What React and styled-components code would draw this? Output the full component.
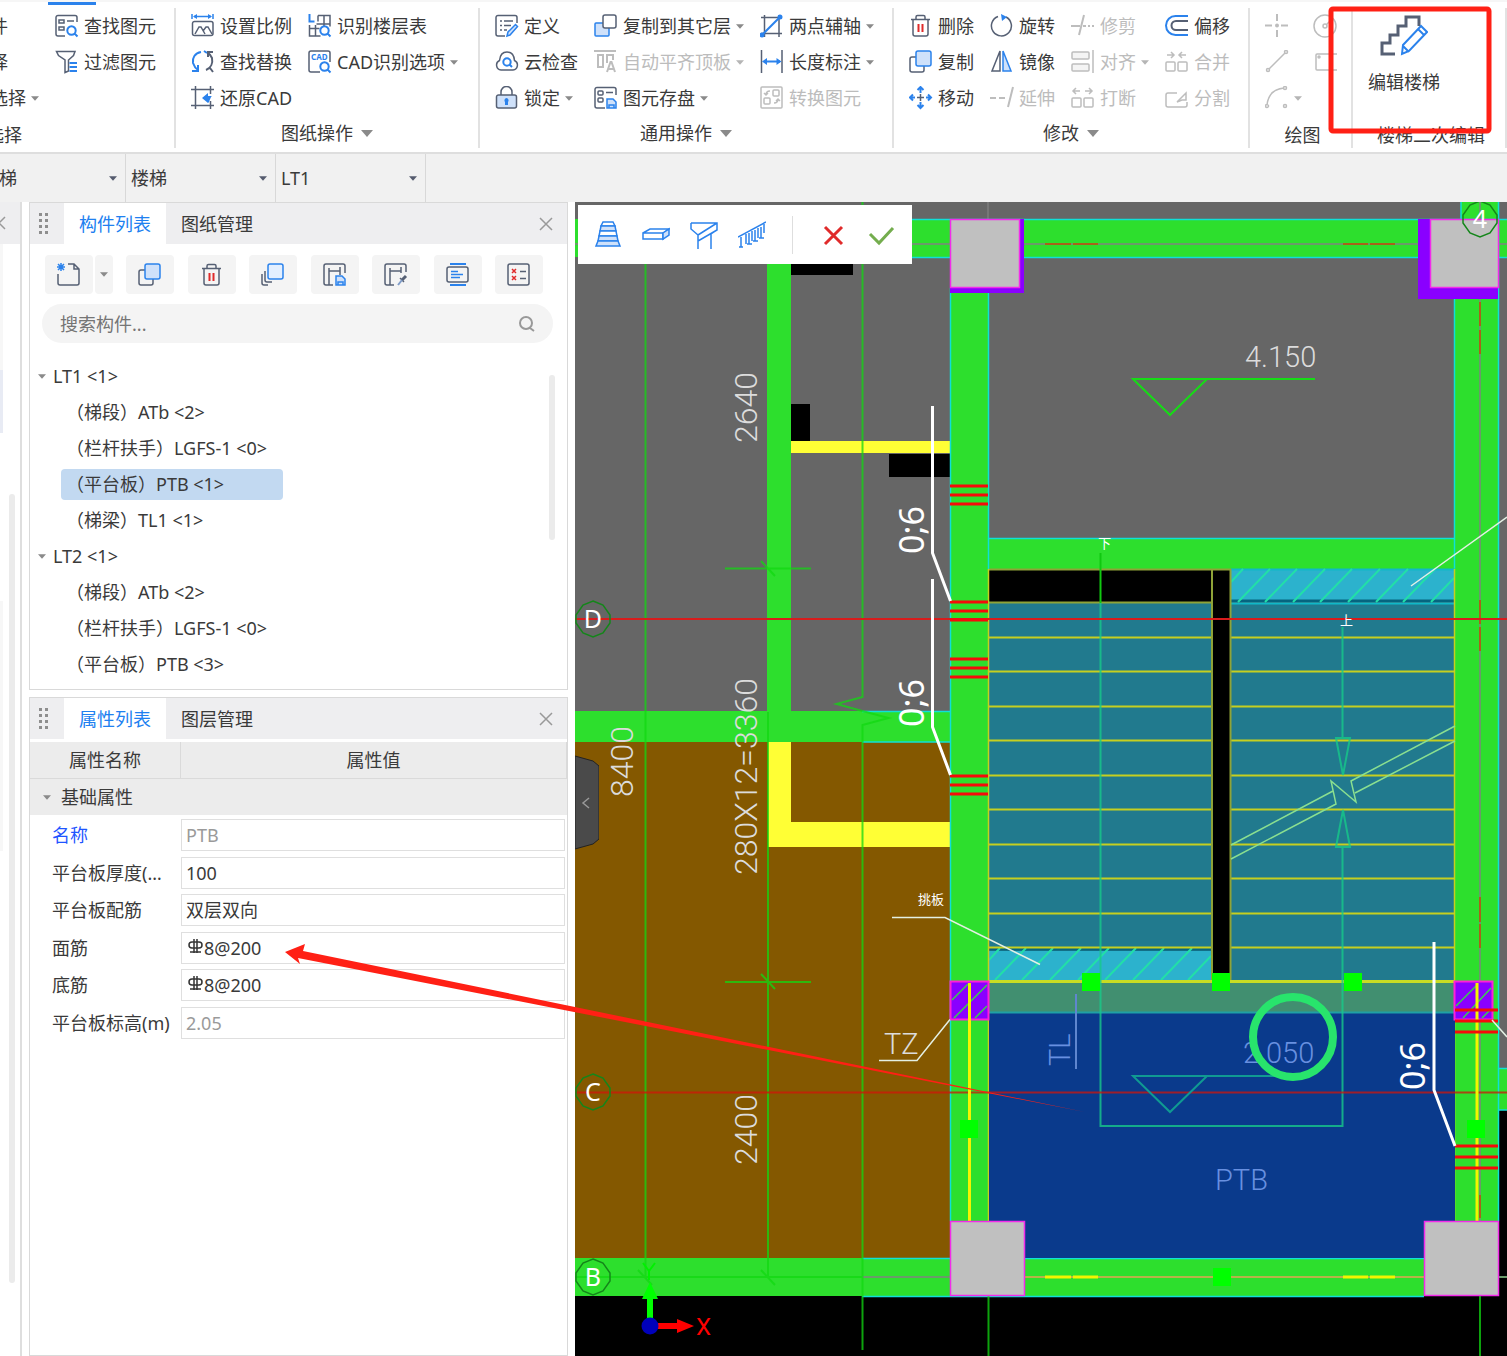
import React from "react";
import styled, { createGlobalStyle } from "styled-components";

const DARK = "#566074";
const BLUE = "#2b82ec";
const PALE = "#cfe1fa";
const GRAY = "#bdbdbd";
const RED = "#e02b2b";

const ring = (cx, cy, r) =>
  `M${cx - r} ${cy}a${r} ${r} 0 1 0 ${2 * r} 0a${r} ${r} 0 1 0 ${-2 * r} 0z`;
const box = (x, y, w, h, r = 1) =>
  `M${x + r} ${y}h${w - 2 * r}a${r} ${r} 0 0 1 ${r} ${r}v${h - 2 * r}a${r} ${r} 0 0 1 ${-r} ${r}h${2 * r - w}a${r} ${r} 0 0 1 ${-r} ${-r}v${2 * r - h}a${r} ${r} 0 0 1 ${r} ${-r}z`;
const lens = `${ring(16.5, 16.5, 4.2)}M19.5 19.5l3 3`;

// every icon is a list of [stroke, path, fill, stroke width]
const icons = {
  findElement: [
    [DARK, "M22 8V3.5a2 2 0 0 0-2-2H3a2 2 0 0 0-2 2V20a2 2 0 0 0 2 2h7"],
    [DARK, "M4 6h5v3H4zM4 13h5v3H4zM12 7h7"],
    [BLUE, lens, "none", 2],
  ],
  filter: [
    [DARK, "M1.5 1.5h18.5l-1.5 4-5 4.5v11L10 22.500V10L3.500 5.500z"],
    [BLUE, "M14.5 13h7.5M14.5 17h7.5M14.5 21h7.5", "none", 2],
  ],
  scale: [
    [BLUE, "M1 0v5M22 0v5M3 2.5h17"],
    ["none", "M2 2.5l4-2.5v5zM21 2.5l-4-2.5v5z", BLUE],
    [DARK, box(1.5, 7.5, 20.5, 14, 2)],
    [DARK, "M4 20l4-7h2l4 7M12 17l3-4h2l4 7"],
  ],
  floors: [
    [BLUE, "M1.5 0v7.5h5", "none", 2],
    [DARK, "M10 1.5h12v11M16 1.5v11M10 1.5v6M8.5 10H22M1.5 11v11h11M1.5 14.5h10M7.5 11v11"],
    [BLUE, lens, "none", 2],
  ],
  replace: [
    [BLUE, "M10 2C4 3 1 8 2 13c1 3 2 5 5 7M7 15v6H1M13 1l3 2", "none", 2],
    [DARK, "M15 20c5-2 7-7 6-12-1-2-2-4-4-5M22 2h-5v5M19 18l3 4", "none", 2],
  ],
  cadOptions: [
    [DARK, "M22 12V3a2 2 0 0 0-2-2H3a2 2 0 0 0-2 2v17a2 2 0 0 0 2 2h9"],
    [BLUE, lens, "none", 2],
  ],
  restore: [
    [DARK, "M4.5 0v23M19.500 0v8M19.5 15v8M0 3.5h23M0 19.5h23"],
    ["none", "M11 12l6-5v3h4c-2 1-2 6-4 7z", BLUE],
  ],
  define: [
    [DARK, "M22 9V3.5a2 2 0 0 0-2-2H3a2 2 0 0 0-2 2V20a2 2 0 0 0 2 2h7M5 7h2M9 7h9M5 11.5h2M9 11.5h7M5 16h2M9 16h3"],
    [BLUE, "M12 22l1-4 7.5-7.5 2 2L15 21z", PALE],
  ],
  cloud: [
    [DARK, "M6 20a5 5 0 0 1-1.5-9.5C5 5 8 2 12 2s7 3 7.5 8.5A5 5 0 0 1 18 20z"],
    [BLUE, `${ring(12, 12, 3.7)}M14.5 14.5l2.5 2.5`, "none", 2],
  ],
  lock: [
    [DARK, "M6 9V6a5.5 5.5 0 0 1 11 0v3"],
    [DARK, box(1.5, 9, 20, 13, 2), PALE],
    ["none", "M11.5 12a2.5 2.5 0 0 1 1.500 4v3h-3v-3a2.5 2.5 0 0 1 1.5-4z", BLUE],
  ],
  copyFloor: [
    [BLUE, box(1, 9, 14, 13), PALE],
    [DARK, box(9, 1, 13, 13, 2), "#fff"],
  ],
  autoAlign: [
    [GRAY, "M0 1h22M4 5h5v12H4zM13 13V5h6v5", "none", 2],
    [GRAY, "M13 22l3.5-10h1L21 22M14 19h6", "none", 2],
  ],
  save: [
    [DARK, "M22 9V3.5a2 2 0 0 0-2-2H3a2 2 0 0 0-2 2V20a2 2 0 0 0 2 2h8M12 6.5h7"],
    [DARK, `${box(4, 5, 5, 4)}${box(4, 12, 5, 4)}`],
    [BLUE, "M13 13h6l3 3v6h-9zM15 22v-3h5v3", PALE],
  ],
  axis: [
    [DARK, "M4.5 1v22M19 1v22M1 3.5h21M1 19.5h21"],
    [BLUE, "M2 21L20 3", "none", 2],
    ["none", ring(20, 3, 2.5) + ring(2, 21, 2.5), BLUE],
  ],
  dimension: [
    [DARK, "M1.5 0v23M22 0v23"],
    [BLUE, "M4 11.5h16", "none", 2],
    ["none", "M2 11.5l5-3.5v7zM21.5 11.5l-5-3.5v7z", BLUE],
  ],
  convert: [
    [GRAY, `${box(1, 1, 21, 21)}${box(4, 12, 6, 6)}${box(13, 4, 6, 6)}M6 9c0-3 1-4 4-4M8 7L6 9 4 7M18 13c0 3-1 4-4 4M16 15l2-2 2 2`],
  ],
  trash: [
    [DARK, "M2 5.5h19M7 5V3a1.5 1.5 0 0 1 1.5-1.5h6A1.500 1.5 0 0 1 16 3v2M4 5.5V20a2 2 0 0 0 2 2h11a2 2 0 0 0 2-2V5.5"],
    [RED, "M9.5 10v8M13.5 10v8", "none", 2],
  ],
  rotate: [
    [DARK, "M8 2.5A10 10 0 1 0 16 3"],
    ["none", "M11 0l6 3-5 4z", BLUE],
  ],
  trim: [[GRAY, "M13 1L8 21M0 12h9M12 12h3M17 12h2M21 12h2", "none", 2]],
  offset: [
    [BLUE, "M23 2H10.5a9.5 9.5 0 0 0 0 19H23", "none", 2],
    [DARK, "M23 7H11a4.5 4.5 0 0 0 0 9h12", "none", 2],
  ],
  copy: [
    [DARK, box(1, 7, 14, 15, 2)],
    [BLUE, box(7, 1, 15, 15, 2), PALE],
  ],
  mirror: [
    [DARK, "M10 1v20H2z"],
    [BLUE, "M13 1v20h8z", PALE],
  ],
  align: [
    [GRAY, "M22 0v23"],
    [GRAY, `${box(1, 2, 17, 7)}${box(1, 14, 17, 7)}`, "#f4f4f4"],
  ],
  merge: [[GRAY, `${box(1, 12, 9, 9)}${box(13, 12, 9, 9)}M2 5h7M6 2l3 3-3 3M21 5h-7M17 2l-3 3 3 3`]],
  move: [
    [BLUE, "M11.5 1v6M8.5 4l3-3 3 3M11.5 16v6M8.5 19l3 3 3-3M1 11.5h5M4 8.5l-3 3 3 3M17 11.5h5M19 8.5l3 3-3 3", "none", 2],
    [DARK, "M8 11.5h7M11.5 8v7"],
  ],
  extend: [[GRAY, "M0 12h6M9 12h6M23 1l-5 20", "none", 2]],
  breakApart: [[GRAY, `${box(1, 12, 9, 9)}${box(13, 12, 9, 9)}M2 5h7M5 2L2 5l3 3M21 5h-7M18 2l3 3-3 3`]],
  split: [[GRAY, "M12 7H3a2 2 0 0 0-2 2v10a2 2 0 0 0 2 2h17a2 2 0 0 0 2-2v-3M12 16l9-9v7h-4z"]],
  point: [
    [GRAY, "M12 0v7M12 16v7M0 11.5h7M16 11.5h7", "none", 2],
    ["none", ring(12, 11.5, 2), GRAY],
  ],
  circle: [[GRAY, `${ring(12, 12, 11)}${ring(12, 12, 2)}M14 10l4-4`]],
  line: [[GRAY, `M4 19L20 3${ring(3, 20, 1.5)}${ring(21, 2, 1.5)}`]],
  rect: [[GRAY, `${box(3, 4, 24, 16)}${ring(6, 7, 1)}`]],
  arc: [[GRAY, `M2 19C3 9 9 3 19 2${ring(2, 20, 1.5)}${ring(20, 2, 1.5)}${ring(20, 20, 1.5)}`]],
  newItem: [
    [BLUE, "M1 1l6 6M7 1L1 7M4 0v8M0 4h8"],
    [DARK, "M11 1h6l5 5v14a2 2 0 0 1-2 2H3a2 2 0 0 1-2-2v-9M17 1v5h5"],
  ],
  layerCopy: [
    [DARK, "M1 11v9a2 2 0 0 0 2 2h4M4 8v9a2 2 0 0 0 2 2h5"],
    [BLUE, box(7, 1, 15, 15, 2), "#e3efff"],
  ],
  hSave: [
    [DARK, "M22 10V3a2 2 0 0 0-2-2H3a2 2 0 0 0-2 2v17a2 2 0 0 0 2 2h7M6 5v17M17 4v8M6 8h11"],
    [BLUE, "M13 13h6l3 3v6h-9zM15 22v-3h5v3", PALE],
  ],
  hPick: [
    [DARK, "M22 9V3a2 2 0 0 0-2-2H3a2 2 0 0 0-2 2v17a2 2 0 0 0 2 2h7M6 5v17M17 4v6M6 8h11"],
    [DARK, "M16 15l4 4"],
    [DARK, "M22 13l-4 4", "none", 3],
    ["#7f9cc8", "M18 17l-4 5", "none", 2],
  ],
  report: [
    [BLUE, "M4 1h16M4 22h16", "none", 2],
    [DARK, box(1, 4, 21, 15, 2)],
    [BLUE, "M5 8.5h7M5 11.5h12M5 14.5h9"],
  ],
  checklist: [
    [DARK, `${box(1, 1, 21, 21, 2)}M13 8.5h6M13 15.5h6`],
    [RED, "M5 6l4 4M9 6l-4 4M5 13l4 4M9 13l-4 4"],
  ],
  search: [["#999", `${ring(7, 7, 6)}M11 12l4 3`, "none", 2]],
  close: [["#999", "M1 1l12 12M13 1L1 13"]],
  flight: [
    [BLUE, "M9 1h10l2 4H7z", "#fff"],
    [BLUE, "M7 5h14l1 5H6z", PALE],
    [BLUE, "M6 10h16l1 5H5z", "#fff"],
    [BLUE, "M5 15h18l1 5H4z", PALE],
    [BLUE, "M4 20h20l2 5H2z", PALE],
  ],
  slab: [
    [BLUE, "M1 12h20v6H1zM1 12l7-4h19l-6 4"],
    [BLUE, "M21 12l6-4v6l-6 4z", PALE],
  ],
  support: [[BLUE, "M1 2h26v7L8 20v8M1 2v6l7 6v14M27 2L8 14M21 13v15M27 9l-6 4"]],
  railing: [
    [BLUE, "M0 16L28 1"],
    [BLUE, "M3 16v10M1 26h4M8 13v10M11 12v11M9 23h5M14 10v10M17 9v11M15 20h5M20 7v10M23 6v11M21 17h5M26 3v9"],
  ],
  cross: [[RED, "M6 6l17 17M23 6L6 23", "none", 3]],
  check: [["#74ad4e", "M3 13l9 9L26 7", "none", 3]],
  stairs: [
    [DARK, "M15 40H2V29h8v-8h8v-9h8V3h13v9", "none", 3],
    [BLUE, "M22 40l1-9L41 12l6 6-18 19zM38 15l6 6M23 32l6 6", "none", 2],
  ],
};

function Icon({ name, size = 24, view = 24 }) {
  return (
    <svg width={size} height={size} viewBox={`0 0 ${view} ${view}`} fill="none" aria-hidden="true">
      {icons[name].map(([stroke, d, fill, width], i) => (
        <path key={i} d={d} stroke={stroke} fill={fill || "none"} strokeWidth={width || 1.5} />
      ))}
      {name === "cadOptions" && (
        <text x="3" y="10" fontSize="8" fontWeight="700" fill={BLUE}>
          CAD
        </text>
      )}
    </svg>
  );
}

const Caret = ({ big, color = "#8a8a8a" }) => (
  <svg width={big ? 12 : 8} height={big ? 7 : 5} viewBox="0 0 12 7" aria-hidden="true">
    <path d="M0 0h12L6 7z" fill={color} />
  </svg>
);

const ribbon = [
  {
    label: "选择",
    width: 190,
    clipped: true,
    low: true,
    columns: [
      [{ text: "件" }, { text: "择" }, { text: "选择", menu: true }],
      [
        { icon: "findElement", text: "查找图元" },
        { icon: "filter", text: "过滤图元" },
      ],
    ],
  },
  {
    label: "图纸操作",
    width: 304,
    menu: true,
    columns: [
      [
        { icon: "scale", text: "设置比例" },
        { icon: "replace", text: "查找替换" },
        { icon: "restore", text: "还原CAD" },
      ],
      [
        { icon: "floors", text: "识别楼层表" },
        { icon: "cadOptions", text: "CAD识别选项", menu: true },
      ],
    ],
  },
  {
    label: "通用操作",
    width: 414,
    menu: true,
    columns: [
      [
        { icon: "define", text: "定义" },
        { icon: "cloud", text: "云检查" },
        { icon: "lock", text: "锁定", menu: true },
      ],
      [
        { icon: "copyFloor", text: "复制到其它层", menu: true },
        { icon: "autoAlign", text: "自动平齐顶板", menu: true, off: true },
        { icon: "save", text: "图元存盘", menu: true },
      ],
      [
        { icon: "axis", text: "两点辅轴", menu: true },
        { icon: "dimension", text: "长度标注", menu: true },
        { icon: "convert", text: "转换图元", off: true },
      ],
    ],
  },
  {
    label: "修改",
    width: 356,
    menu: true,
    columns: [
      [
        { icon: "trash", text: "删除" },
        { icon: "copy", text: "复制" },
        { icon: "move", text: "移动" },
      ],
      [
        { icon: "rotate", text: "旋转" },
        { icon: "mirror", text: "镜像" },
        { icon: "extend", text: "延伸", off: true },
      ],
      [
        { icon: "trim", text: "修剪", off: true },
        { icon: "align", text: "对齐", menu: true, off: true },
        { icon: "breakApart", text: "打断", off: true },
      ],
      [
        { icon: "offset", text: "偏移" },
        { icon: "merge", text: "合并", off: true },
        { icon: "split", text: "分割", off: true },
      ],
    ],
  },
  {
    label: "绘图",
    width: 103,
    low: true,
    tight: true,
    columns: [
      [
        { icon: "point", title: "点", off: true },
        { icon: "line", title: "直线", off: true },
        { icon: "arc", title: "弧", menu: true, off: true },
      ],
      [
        { icon: "circle", title: "圆", off: true },
        { icon: "rect", title: "矩形", off: true },
      ],
    ],
  },
];

const treeRows = [
  { text: "LT1 <1>", parent: true },
  { text: "（梯段）ATb <2>" },
  { text: "（栏杆扶手）LGFS-1 <0>" },
  { text: "（平台板）PTB <1>", selected: true },
  { text: "（梯梁）TL1 <1>" },
  { text: "LT2 <1>", parent: true },
  { text: "（梯段）ATb <2>" },
  { text: "（栏杆扶手）LGFS-1 <0>" },
  { text: "（平台板）PTB <3>" },
];

const properties = [
  { id: "name", label: "名称", value: "PTB", muted: true, link: true },
  { id: "thickness", label: "平台板厚度(mm)", value: "100" },
  { id: "layout", label: "平台板配筋", value: "双层双向" },
  { id: "top", label: "面筋", value: "8@200", rebar: true },
  { id: "bottom", label: "底筋", value: "8@200", rebar: true },
  { id: "level", label: "平台板标高(m)", value: "2.05", muted: true },
];

const panelTools = [
  ["copy", "复制"],
  ["trash", "删除"],
  ["layerCopy", "层间复制"],
  ["hSave", "存档"],
  ["hPick", "提取"],
  ["report", "做法"],
  ["checklist", "检查"],
];

const stairTools = [
  ["flight", "梯段"],
  ["slab", "平台板"],
  ["support", "梯梁"],
  ["railing", "栏杆扶手"],
];

function Ribbon() {
  return (
    <RibbonBar>
      <ActiveMark />
      {ribbon.map((group) => (
        <Group key={group.label} $width={group.width} $clipped={group.clipped}>
          <Tools $tight={group.tight} $clipped={group.clipped}>
            {group.columns.map((column, i) => (
              <ToolColumn key={i}>
                {column.map((tool) => (
                  <ToolButton key={tool.text || tool.title} $off={tool.off} aria-label={tool.title}>
                    {tool.icon && <Icon name={tool.icon} />}
                    {tool.text && <span>{tool.text}</span>}
                    {tool.menu && <Caret color={tool.off ? "#b5b5b5" : undefined} />}
                  </ToolButton>
                ))}
              </ToolColumn>
            ))}
          </Tools>
          <GroupLabel $low={group.low} $left={group.clipped}>
            {group.label}
            {group.menu && <Caret big />}
          </GroupLabel>
        </Group>
      ))}
      <Group $width={154}>
        <Tools>
          <BigButton>
            <Icon name="stairs" size={48} view={48} />
            编辑楼梯
          </BigButton>
        </Tools>
        <GroupLabel $low>楼梯二次编辑</GroupLabel>
      </Group>
    </RibbonBar>
  );
}

function PanelHeader({ tabs }) {
  return (
    <Header>
      <Grip viewBox="0 0 10 22">
        {[0, 6, 12, 18].map((y) => (
          <path key={y} d={`M0 ${y}h3v3h-3zM6 ${y}h3v3h-3z`} fill="#8e8e8e" />
        ))}
      </Grip>
      <Tab $active>{tabs[0]}</Tab>
      <Tab>{tabs[1]}</Tab>
      <CloseButton aria-label="关闭">
        <Icon name="close" size={14} view={14} />
      </CloseButton>
    </Header>
  );
}

function ComponentPanel() {
  return (
    <Panel>
      <PanelHeader tabs={["构件列表", "图纸管理"]} />
      <PanelTools>
        <SplitButton>
          <IconButton aria-label="新建">
            <Icon name="newItem" />
          </IconButton>
          <IconButton $narrow aria-label="新建选项">
            <Caret />
          </IconButton>
        </SplitButton>
        {panelTools.map(([icon, title]) => (
          <IconButton key={icon} aria-label={title}>
            <Icon name={icon} />
          </IconButton>
        ))}
      </PanelTools>
      <SearchBox>
        <input type="text" placeholder="搜索构件..." aria-label="搜索构件" />
        <Icon name="search" size={16} view={16} />
      </SearchBox>
      <TreeArea>
        <Tree>
          {treeRows.map((row, i) => (
            <TreeRow key={i} $parent={row.parent}>
              {row.parent && <Caret />}
              <TreeItem $parent={row.parent} $selected={row.selected}>
                {row.text}
              </TreeItem>
            </TreeRow>
          ))}
        </Tree>
        <Thumb />
      </TreeArea>
    </Panel>
  );
}

function PropertyPanel() {
  return (
    <Panel $grow>
      <PanelHeader tabs={["属性列表", "图层管理"]} />
      <PropertyTable>
        <thead>
          <tr>
            <th>属性名称</th>
            <th>属性值</th>
          </tr>
        </thead>
        <tbody>
          <GroupRow>
            <td colSpan={2}>
              <Caret />
              <span>基础属性</span>
            </td>
          </GroupRow>
          {properties.map((prop) => (
            <PropertyRow key={prop.id}>
              <td>
                <PropertyLabel htmlFor={prop.id} $link={prop.link}>
                  {prop.label}
                </PropertyLabel>
              </td>
              <td>
                <Field $muted={prop.muted}>
                  {prop.rebar && (
                    <svg width="18" height="20" viewBox="0 0 18 20" fill="none" stroke="#333" strokeWidth="1.5">
                      <path d={`${box(3, 4, 13, 6, 3)}M8 1v14M11 1v14M4 14h11`} />
                    </svg>
                  )}
                  <input id={prop.id} type="text" defaultValue={prop.value} />
                </Field>
              </td>
            </PropertyRow>
          ))}
        </tbody>
      </PropertyTable>
    </Panel>
  );
}

const treads = [637, 671, 706, 740, 775, 809, 844, 878, 913, 947];
const hatchTop = [1238, 1265, 1293, 1320, 1348, 1376, 1403];
const hatchBottom = [995, 1022, 1050, 1078, 1105, 1133, 1161];
const handles = [
  [1091, 982],
  [1221, 982],
  [1353, 982],
  [969, 1129],
  [1476, 1129],
  [1222, 1277],
];

const AxisBubble = ({ x, y, name }) => (
  <g>
    <path
      d={`M${x} ${y - 18}l10 4 7 10v8l-7 10-10 4-10-4-7-10v-8l7-10z`}
      fill="none"
      stroke="#14861a"
      strokeWidth="1.5"
    />
    <AxisText x={x} y={y + 9}>
      {name}
    </AxisText>
  </g>
);

const StirrupMarks = ({ x, y, width, step }) => (
  <path
    d={[0, 1, 2].map((n) => `M${x} ${y + n * step}h${width}`).join("")}
    stroke="#f60a0a"
    strokeWidth="3"
  />
);

function Drawing() {
  return (
    <DrawingSvg>
      <g transform="translate(-575 -202)" fill="none">
        {/* rooms */}
        <path d="M575 202h2400v1100H575z" fill="#666" />
        <path d="M575 742h375v516H575z" fill="#845800" />
        <path d="M575 1296h2400v2000H575zM1499 1110h1476v200H1499z" fill="#000" />
        <path d="M791 264h62v11h-62zM791 404h19v37h-19zM889 454h61v23h-61z" fill="#000" />
        <path d="M988 202v17" stroke="#888" />

        {/* walls and beams */}
        <g fill="#2ddf2d">
          <path d="M575 219h2400v38H575zM767 257h24v455h-24zM575 711h375v31H575z" />
          <path d="M950 257h38v964h-38zM1455 202h43v1019h-43zM988 538h467v31H988z" />
          <path d="M575 1258h923v38H575zM1499 1068h1476v42H1499z" />
        </g>
        <path d="M1455 202h6v17h-6z" fill="#666" />
        <path d="M791 441h159v12H791zM768 742h23v80h159v25H768z" fill="#ffff35" />
        <path d="M575 244h2400M1480 202v1019M862 1277h88M1499 1277h1476" stroke="#6a9a6a" strokeWidth="2" />
        <path
          d="M1045 244h26M1073 244h25M1343 244h25M1370 244h25M1480 302v24M1480 330v24M1480 600v24M1480 627v24M1480 897v25M1480 924v24M1480 1195v23"
          stroke="#a8621a"
          strokeWidth="2"
        />
        <path
          d="M912 219.5H2975M912 257.5H2975M950.5 288V1221M1498.5 202V1221M1461 202v17M988.5 288V569M1454.5 288V569M988 538.5h467M862 711.5h88M862 742h88M862 1258.5h562M862 1296.5h562M1499 1068.5h1476M1499 1110h1476"
          stroke="#0fe0d8"
          strokeWidth="1.5"
        />

        {/* stair well */}
        <path d="M989 569h242v412H989z" fill="#000" />
        <path d="M989 603h223v378H989zM1231 603h224v378h-224z" fill="#217a8e" />
        <path d="M1231 569h224v31h-224zM989 951h223v30H989z" fill="#2cb2cd" />
        <path d="M1231 601h224M989 949h223" stroke="#06647f" strokeWidth="3" />
        <path d="M1231 603.5h224M1231 569.5h224" stroke="#10b8c8" strokeWidth="2" />
        <path
          d={`${hatchTop.map((x) => `M${x} 602l32-33`).join("")}${hatchBottom
            .map((x) => `M${x} 980l31-32`)
            .join("")}M1431 602l23-24M1231 582l12-13M1188 980l23-24M989 960l11-12`}
          stroke="#22dfa8"
          strokeWidth="2"
        />
        <path
          d={treads.map((y) => `M989 ${y}.5h223M1231 ${y}.5h224`).join("")}
          stroke="#c6cf20"
          strokeWidth="2"
        />
        <path d="M989 602.5h223M1212 569v412M1230.5 569v412M989 569.5h242" stroke="#8fa338" strokeWidth="2" />
        <path d="M988.5 569v652M1454.5 569v652" stroke="#c6cf20" strokeWidth="1.5" />

        {/* landing slab */}
        <path d="M989 982h466v30H989z" fill="#418f70" />
        <path d="M989 1012h466v246H989z" fill="#0a3a8c" />
        <path d="M989 1012.5h466" stroke="#1fa0a5" strokeWidth="2" />
        <path d="M989 981.5h466" stroke="#c8dc22" strokeWidth="3" />

        {/* travel line */}
        <path d="M1100.5 553v50" stroke="#10c810" strokeWidth="2" />
        <path
          d="M1100.5 603v523h242V847M1342.5 627v111M1336 738h14l-7 37zM1336 847h14l-7-37z"
          stroke="#17c98a"
          strokeOpacity="0.8"
          strokeWidth="2"
        />
        <path
          d="M1231 859l105-55-5-23 25 21-5-21 104-55M1231 845l102-54M1355 793l100-52"
          stroke="#8adf90"
          strokeWidth="1.5"
        />

        {/* grid lines */}
        <path
          d="M645.5 264v1013M768 712v565M862.5 202v495l-26 7 52 14-26 7v625M725 568.5h86M725 982h86M761 561l14 15M761 974l14 15M575 1277h287M761 1270l14 15M638 1270l14 15M862.5 1296v54M988.5 1296v60M1480 1296v60"
          stroke="#12d812"
          strokeOpacity="0.75"
          strokeWidth="2"
        />
        <path d="M575 619h2400" stroke="#d81c1c" strokeWidth="2" />
        <path d="M575 1092.5h2400" stroke="#d0150a" strokeOpacity="0.75" strokeWidth="2" />

        {/* small columns */}
        <path
          d="M950.5 981.5h38v38h-38zM1454.5 981.5h38v38h-38z"
          fill="#8a00ff"
          stroke="#ff20d8"
          strokeWidth="2"
        />
        <path
          d="M952 1000l16-16M954 1018l33-33M975 1018l12-12M1456 1006l22-22M1463 1018l28-30M1482 1018l9-9"
          stroke="#3ccc50"
          strokeWidth="1.5"
        />
        <path d="M969.5 983v238M1477 983v238" stroke="#f4f400" strokeWidth="3" />
        <path d="M1025 1277h399" stroke="#b8b24a" strokeWidth="2" />
        <path d="M1045 1277h26M1073 1277h25M1343 1277h25M1370 1277h25" stroke="#f4f400" strokeWidth="3" />

        {/* large columns */}
        <path d="M950 219h74v74h-74zM1418 219h80v80h-80z" fill="#8a00ff" />
        <path
          d="M950.5 219.5h69v68h-69zM1430.5 219.5h68v68h-68zM950.5 1221.5h74v74h-74zM1424.5 1221.5h74v74h-74z"
          fill="#c0c0c0"
          stroke="#f32bea"
          strokeWidth="1.5"
        />

        <StirrupMarks x={950} y={486} width={38} step={9} />
        <StirrupMarks x={950} y={602} width={38} step={9} />
        <StirrupMarks x={950} y={659} width={38} step={9} />
        <StirrupMarks x={950} y={776} width={38} step={9} />
        <StirrupMarks x={1455} y={1010} width={43} step={11} />
        <StirrupMarks x={1455} y={1146} width={43} step={11} />
        <path d={handles.map(([x, y]) => `M${x - 9} ${y - 9}h18v18h-18z`).join("")} fill="#00ff00" />

        {/* leaders */}
        <path
          d="M932.5 406v147l18 48M932.5 579v148l18 48M1434 942v148l21 56"
          stroke="#fff"
          strokeWidth="3"
        />
        <path
          d="M892 917.5h53l95 47M879 1060.5h38l33-41M1411 586l96-69M1492 1020l15 17"
          stroke="#e4f0e4"
          strokeWidth="1.5"
        />
        <path d="M1076 994v75" stroke="#5f86cf" strokeWidth="2" />

        {/* level marks */}
        <path d="M1315 379H1133l37 36 37-36" stroke="#16dc16" strokeWidth="2" />
        <path d="M1285 1076H1133l37 36 37-36" stroke="#109a92" strokeWidth="2" />

        <CadText x="1245" y="367" $small>4.150</CadText>
        <CadText x="1243" y="1063" $small $blue>2.050</CadText>
        <CadText x="1215" y="1190" $small $blue>PTB</CadText>
        <CadText x="884" y="1054" $small>TZ</CadText>
        <CadText transform="translate(1070 1066) rotate(-90)" $small $blue>TL</CadText>
        <CadText transform="translate(757 443) rotate(-90)">2640</CadText>
        <CadText transform="translate(757 875) rotate(-90)">280X12=3360</CadText>
        <CadText transform="translate(633 797) rotate(-90)">8400</CadText>
        <CadText transform="translate(757 1165) rotate(-90)">2400</CadText>
        <MarkText transform="translate(924 554) rotate(-90)">0;6</MarkText>
        <MarkText transform="translate(924 727) rotate(-90)">0;6</MarkText>
        <MarkText transform="translate(1425 1090) rotate(-90)">0;6</MarkText>
        <NoteText x="918" y="904">挑板</NoteText>
        <NoteText x="1098" y="548">下</NoteText>
        <NoteText x="1340" y="625">上</NoteText>

        <AxisBubble x={593} y={619} name="D" />
        <AxisBubble x={593} y={1092} name="C" />
        <AxisBubble x={593} y={1277} name="B" />
        <AxisBubble x={1480} y={219} name="4" />

        {/* ucs */}
        <path d="M643 1263l6 8 6-8M649 1271v9" stroke="#00f000" strokeWidth="2" />
        <path d="M647 1298h6v20h-6zM650 1282l8 17h-16z" fill="#00ff00" />
        <path d="M658 1323h19v-4l17 7-17 7v-4h-19z" fill="#f00" />
        <path d={ring(650, 1326, 8.5)} fill="#0000bb" />
        <UcsText x="696" y="1335">X</UcsText>
      </g>
    </DrawingSvg>
  );
}

function Canvas() {
  return (
    <CanvasArea>
      <Drawing />
      <FloatingBar>
        {stairTools.map(([icon, title]) => (
          <FloatButton key={icon} aria-label={title}>
            <Icon name={icon} size={28} view={28} />
          </FloatButton>
        ))}
        <Separator />
        <FloatButton aria-label="取消">
          <Icon name="cross" size={28} view={28} />
        </FloatButton>
        <FloatButton aria-label="确定">
          <Icon name="check" size={28} view={28} />
        </FloatButton>
      </FloatingBar>
      <CollapseButton aria-label="收起">
        <svg width="24" height="95" viewBox="0 0 24 95">
          <path d="M0 1l18 5 6 5v73l-6 5-18 5z" fill="#4a4a4a" stroke="#222" />
          <path d="M14 43l-6 5 6 5" fill="none" stroke="#999" strokeWidth="1.5" />
        </svg>
      </CollapseButton>
    </CanvasArea>
  );
}

export default function App() {
  return (
    <Page>
      <GlobalStyle />
      <Ribbon />
      <ComboBar>
        {["楼梯", "楼梯", "LT1"].map((value, i) => (
          <Combo key={i}>
            <select aria-label={`构件选择 ${i + 1}`}>
              <option>{value}</option>
            </select>
            <Caret color="#555b6e" />
          </Combo>
        ))}
      </ComboBar>
      <Workspace>
        <NavStrip>
          <NavHeader>
            <Icon name="close" size={14} view={14} />
          </NavHeader>
          <NavBody>
            <NavList>
              <NavSection $height={126} />
              <NavSection $height={63} $active />
              <NavSection $height={168} $blank />
              <NavSection $height={250} />
            </NavList>
            <NavThumb />
          </NavBody>
        </NavStrip>
        <Side>
          <ComponentPanel />
          <PropertyPanel />
        </Side>
        <Canvas />
      </Workspace>
      {/* markup drawn over the whole window */}
      <Markup>
        <rect x="1331" y="9" width="158" height="122" rx="2" fill="none" stroke="#ff2015" strokeWidth="5" />
        <path d="M285 952l20-8-2 7 782 161-787-154 2 6z" fill="#ff2015" />
        <circle cx="1293" cy="1037" r="40" fill="none" stroke="#28e46c" strokeWidth="8" />
      </Markup>
    </Page>
  );
}

const GlobalStyle = createGlobalStyle`
  *, *::before, *::after {
    box-sizing: border-box;
  }
  body {
    margin: 0;
    background: #fff;
  }
  body, button, input, select {
    font-family: "Noto Sans", "Noto Sans CJK SC", sans-serif;
    font-size: 18px;
    line-height: 24px;
    color: #3a3a3a;
  }
  button {
    padding: 0;
    border: 0;
    background: none;
    cursor: pointer;
  }
  svg {
    flex: none;
    display: block;
  }
`;
const Page = styled.div`
  position: relative;
  display: flex;
  flex-direction: column;
  min-height: 100vh;
  overflow: hidden;
`;
const RibbonBar = styled.header`
  position: relative;
  display: flex;
  height: 154px;
  padding-top: 6px;
  background: #fff;
  border-top: 2px solid #f6f6f6;
  border-bottom: 2px solid #dedede;
  overflow: hidden;
`;
const ActiveMark = styled.div`
  position: absolute;
  top: -2px;
  left: 48px;
  width: 48px;
  height: 5px;
  background: #2b82ec;
`;
const Group = styled.section`
  flex: none;
  width: ${(p) => p.$width}px;
  height: 140px;
  margin-left: ${(p) => (p.$clipped ? "-14px" : "0")};
  border-right: 2px solid #e2e2e2;
`;
const Tools = styled.div`
  display: flex;
  gap: ${(p) => (p.$tight ? "11px" : "16px")};
  height: 108px;
  padding-left: ${(p) => (p.$clipped ? "4px" : "15px")};
`;
const ToolColumn = styled.div`
  display: flex;
  flex-direction: column;
`;
const ToolButton = styled.button`
  display: flex;
  align-items: center;
  gap: 5px;
  height: 36px;
  white-space: nowrap;
  color: ${(p) => (p.$off ? "#bcbcbc" : "#3a3a3a")};
`;
const BigButton = styled.button`
  display: flex;
  flex-direction: column;
  align-items: center;
  gap: 8px;
  height: 90px;
  padding-top: 6px;
`;
const GroupLabel = styled.div`
  display: flex;
  align-items: center;
  justify-content: ${(p) => (p.$left ? "flex-start" : "center")};
  gap: 8px;
  padding-top: ${(p) => (p.$low ? "7px" : "5px")};
  padding-left: ${(p) => (p.$low && !p.$left ? "4px" : "0")};
`;
const ComboBar = styled.div`
  display: flex;
  height: 48px;
  margin-left: -24px;
  background: #f1f1f1;
`;
const Combo = styled.div`
  display: grid;
  align-items: center;
  width: 150px;
  border-right: 1px solid #d8d8d8;
  select,
  svg {
    grid-area: 1 / 1;
  }
  select {
    width: 100%;
    height: 46px;
    padding: 0 5px;
    border: 0;
    background: transparent;
    appearance: none;
  }
  svg {
    justify-self: end;
    margin-right: 8px;
    pointer-events: none;
  }
`;
const Workspace = styled.main`
  flex: 1;
  display: flex;
`;
const NavStrip = styled.aside`
  display: flex;
  flex-direction: column;
  width: 22px;
  margin-right: 7px;
  border-right: 2px solid #dedede;
`;
const NavHeader = styled.div`
  display: flex;
  align-items: center;
  height: 42px;
  background: #eeeef0;
  svg {
    margin-left: -8px;
  }
`;
const NavBody = styled.div`
  flex: 1;
  display: flex;
  gap: 6px;
`;
const NavList = styled.div`
  width: 3px;
`;
const NavSection = styled.div`
  height: ${(p) => p.$height}px;
  background: ${(p) => (p.$blank ? "#fff" : p.$active ? "#e8ebf4" : "#f7f7f7")};
`;
const NavThumb = styled.div`
  width: 6px;
  margin: 250px 0 73px;
  border-radius: 3px;
  background: #ebebeb;
`;
const Side = styled.div`
  display: flex;
  flex-direction: column;
  flex: none;
  gap: 7px;
  width: 539px;
  margin-right: 7px;
`;
const Panel = styled.section`
  flex: ${(p) => (p.$grow ? "1" : "none")};
  background: #fff;
  border: 1px solid #d9d9d9;
`;
const Header = styled.div`
  display: flex;
  align-items: stretch;
  height: 41px;
  padding-right: 14px;
  background: #eeeef0;
`;
const Grip = styled.svg`
  width: 10px;
  height: 22px;
  margin: 10px 15px 0 9px;
`;
const Tab = styled.button`
  padding: 0 15px;
  background: ${(p) => (p.$active ? "#fff" : "transparent")};
  color: ${(p) => (p.$active ? "#2080f0" : "#3a3a3a")};
`;
const CloseButton = styled.button`
  margin-left: auto;
`;
const PanelTools = styled.div`
  display: flex;
  justify-content: space-between;
  padding: 11px 24px 0 15px;
`;
const SplitButton = styled.div`
  display: flex;
  gap: 2px;
`;
const IconButton = styled.button`
  display: flex;
  align-items: center;
  justify-content: center;
  width: ${(p) => (p.$narrow ? "18px" : "48px")};
  height: 39px;
  border-radius: 4px;
  background: #f4f4f4;
`;
const SearchBox = styled.div`
  display: flex;
  align-items: center;
  height: 39px;
  margin: 10px 14px 0 12px;
  padding: 0 18px;
  border-radius: 20px;
  background: #f4f4f4;
  input {
    flex: 1;
    min-width: 0;
    padding: 0;
    border: 0;
    outline: 0;
    background: transparent;
  }
  input::placeholder {
    color: #757575;
  }
`;
const TreeArea = styled.div`
  display: flex;
  padding: 15px 12px 7px 8px;
`;
const Tree = styled.ul`
  flex: 1;
  margin: 0;
  padding: 0;
  list-style: none;
`;
const TreeRow = styled.li`
  display: flex;
  align-items: center;
  gap: 7px;
  height: 36px;
  padding-left: ${(p) => (p.$parent ? "0" : "23px")};
`;
const TreeItem = styled.button`
  min-width: ${(p) => (p.$selected ? "222px" : "0")};
  height: 31px;
  padding: ${(p) => (p.$parent ? "0" : "0 5px")};
  border-radius: 4px;
  background: ${(p) => (p.$selected ? "#c2d9f1" : "transparent")};
  text-align: left;
  white-space: nowrap;
`;
const Thumb = styled.div`
  width: 6px;
  height: 165px;
  margin-top: 17px;
  border-radius: 3px;
  background: #ebebeb;
`;
const PropertyTable = styled.table`
  width: 100%;
  margin-top: 3px;
  border-collapse: separate;
  border-spacing: 0;
  table-layout: fixed;
  th {
    height: 37px;
    padding: 0;
    font-weight: 400;
    background: #ececec;
    border-bottom: 1px solid #dadada;
    border-right: 1px solid #dadada;
  }
  th:first-child {
    width: 151px;
  }
  td {
    padding: 0;
  }
`;
const GroupRow = styled.tr`
  td {
    height: 37px;
    background: #ececec;
    border-bottom: 1px solid #fff;
  }
  svg {
    display: inline-block;
    margin: 0 10px 4px 13px;
  }
`;
const PropertyRow = styled.tr`
  td {
    height: 37px;
    padding-right: 2px;
  }
  &:nth-child(even) td {
    height: 38px;
  }
`;
const PropertyLabel = styled.label`
  display: block;
  margin: 0 7px 0 22px;
  overflow: hidden;
  text-overflow: ellipsis;
  white-space: nowrap;
  color: ${(p) => (p.$link ? "#1f55ff" : "#3a3a3a")};
`;
const Field = styled.div`
  display: flex;
  align-items: center;
  height: 32px;
  padding-left: 4px;
  border: 1px solid #dfdfdf;
  input {
    flex: 1;
    min-width: 0;
    padding: 0;
    border: 0;
    outline: 0;
    color: ${(p) => (p.$muted ? "#9a9a9a" : "#3a3a3a")};
  }
`;
const CanvasArea = styled.div`
  position: relative;
  flex: 1;
  min-width: 0;
  overflow: hidden;
  background: #666;
`;
const DrawingSvg = styled.svg`
  position: absolute;
  inset: 0;
  width: 100%;
  height: 100%;
`;
const FloatingBar = styled.div`
  position: absolute;
  top: 3px;
  left: 3px;
  display: flex;
  align-items: center;
  gap: 20px;
  width: 334px;
  height: 59px;
  padding: 0 16px;
  background: #fff;
`;
const FloatButton = styled.button`
  width: 28px;
  height: 28px;
`;
const Separator = styled.div`
  width: 1px;
  height: 38px;
  margin: 0 6px;
  background: #dedede;
`;
const CollapseButton = styled.button`
  position: absolute;
  top: 553px;
  left: 0;
`;
const CadText = styled.text`
  font-family: Roboto, sans-serif;
  font-size: ${(p) => (p.$small ? "29px" : "32px")};
  font-weight: 300;
  fill: ${(p) => (p.$blue ? "#6890e0" : "#dcdcdc")};
`;
const MarkText = styled.text`
  font-size: 34px;
  fill: #fff;
`;
const NoteText = styled.text`
  font-size: 13px;
  fill: #fff;
`;
const AxisText = styled.text`
  font-size: 25px;
  text-anchor: middle;
  fill: #fff;
`;
const UcsText = styled.text`
  font-family: Roboto, sans-serif;
  font-size: 24px;
  fill: #f00;
`;
const Markup = styled.svg`
  position: absolute;
  inset: 0;
  width: 100%;
  height: 100%;
  pointer-events: none;
`;
